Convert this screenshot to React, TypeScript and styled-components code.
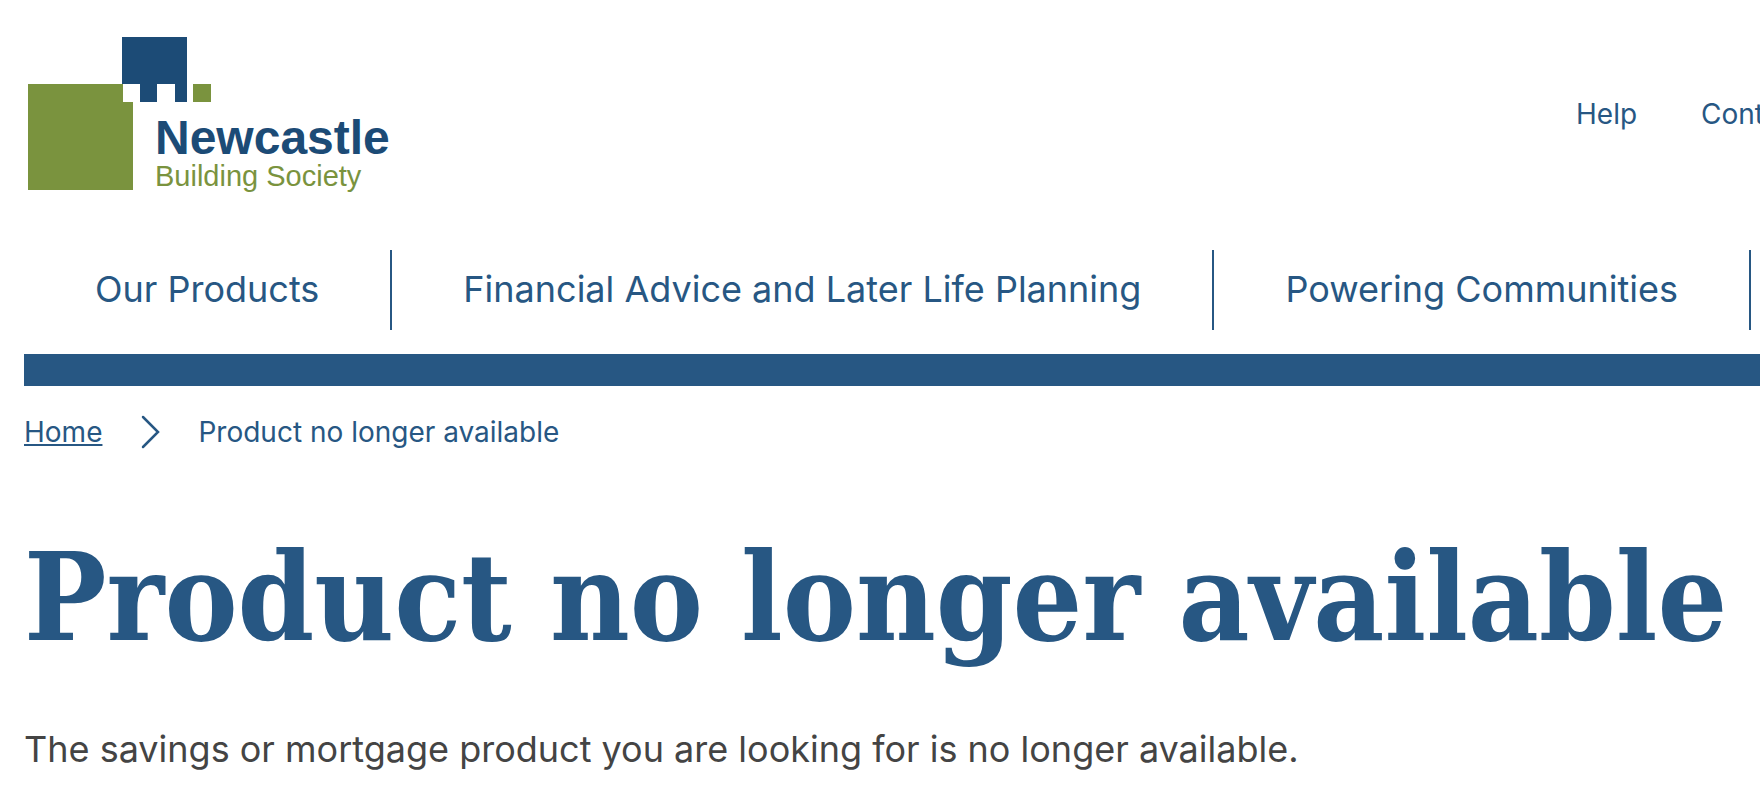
import React from "react";
import styled, { createGlobalStyle } from "styled-components";

const blue = "#275783";

const GlobalStyle = createGlobalStyle`
  body {
    margin: 0;
    background: #fff;
    color: ${blue};
    font-family: Inter, "Liberation Sans", sans-serif;
    overflow-x: hidden;
  }
`;

const Page = styled.div`
  padding-left: 24px;
  overflow: hidden;
`;

const Header = styled.header`
  display: flex;
  flex-direction: column;
`;

const TopRow = styled.div`
  display: flex;
  justify-content: space-between;
  align-items: flex-start;
  padding-top: 32px;
`;

const LogoLink = styled.a`
  display: block;
  margin-bottom: 50px;
`;

const LogoDrawing = styled.svg`
  display: block;
`;

const Utilities = styled.nav`
  display: flex;
  gap: 64px;
  width: 184px;
  padding-top: 64px;
`;

const UtilityLink = styled.a`
  flex: none;
  color: ${blue};
  font-size: 28px;
  line-height: 36px;
  text-decoration: none;
  white-space: nowrap;
`;

const MainNav = styled.nav`
  display: flex;
  padding-bottom: 24px;
  border-bottom: 32px solid ${blue};
`;

const NavItem = styled.a`
  flex: none;
  padding: 0 71px 2px;
  border-right: 2px solid ${blue};
  color: ${blue};
  font-size: 36px;
  line-height: 78px;
  text-decoration: none;
  white-space: nowrap;
`;

const Breadcrumbs = styled.nav`
  display: flex;
  align-items: center;
  gap: 38px;
  padding-top: 28px;
  font-size: 28px;
  line-height: 36px;
`;

const CrumbLink = styled.a`
  color: ${blue};
  text-decoration-thickness: 2px;
  text-underline-offset: 2px;
`;

const Title = styled.h1`
  margin: 67px 0 0;
  font-family: "DejaVu Serif Condensed", "DejaVu Serif", serif;
  font-size: 122px;
  font-weight: 700;
  line-height: 160px;
  white-space: nowrap;
`;

const Message = styled.p`
  margin: 46px 0 0;
  color: #444;
  font-size: 36px;
  line-height: 52px;
`;

const Logo = () => (
  <LogoDrawing width="370" height="168" viewBox="24 32 370 168" role="img" aria-label="Newcastle Building Society">
    <path d="M28 84H123V102H133V190H28Z" fill="#7a933e" />
    <path d="M122 37H187V102H175V84H157V102H140V84H122Z" fill="#1c4b76" />
    <path d="M193 84H211V102H193Z" fill="#7a933e" />
    <text x="155" y="154" fill="#1c4b76" fontFamily="Liberation Sans, sans-serif" fontSize="48" fontWeight="700">
      Newcastle
    </text>
    <text x="155" y="186" fill="#7a933e" fontFamily="Liberation Sans, sans-serif" fontSize="29">
      Building Society
    </text>
  </LogoDrawing>
);

const navItems = ["Our Products", "Financial Advice and Later Life Planning", "Powering Communities"];

export default function App() {
  return (
    <>
      <GlobalStyle />
      <Page>
        <Header>
          <TopRow>
            <LogoLink href="#">
              <Logo />
            </LogoLink>
            <Utilities aria-label="Support">
              <UtilityLink href="#">Help</UtilityLink>
              <UtilityLink href="#">Contact us</UtilityLink>
            </Utilities>
          </TopRow>
          <MainNav aria-label="Main">
            {navItems.map((item) => (
              <NavItem href="#" key={item}>
                {item}
              </NavItem>
            ))}
          </MainNav>
        </Header>
        <Breadcrumbs aria-label="Breadcrumb">
          <CrumbLink href="#">Home</CrumbLink>
          <svg width="20" height="36" viewBox="0 0 20 36" fill="none" stroke={blue} aria-hidden="true">
            <path d="M3 3L18 18L3 33" strokeWidth="2.5" strokeLinecap="round" />
          </svg>
          <span>Product no longer available</span>
        </Breadcrumbs>
        <main>
          <Title>Product no longer available</Title>
          <Message>The savings or mortgage product you are looking for is no longer available.</Message>
        </main>
      </Page>
    </>
  );
}
